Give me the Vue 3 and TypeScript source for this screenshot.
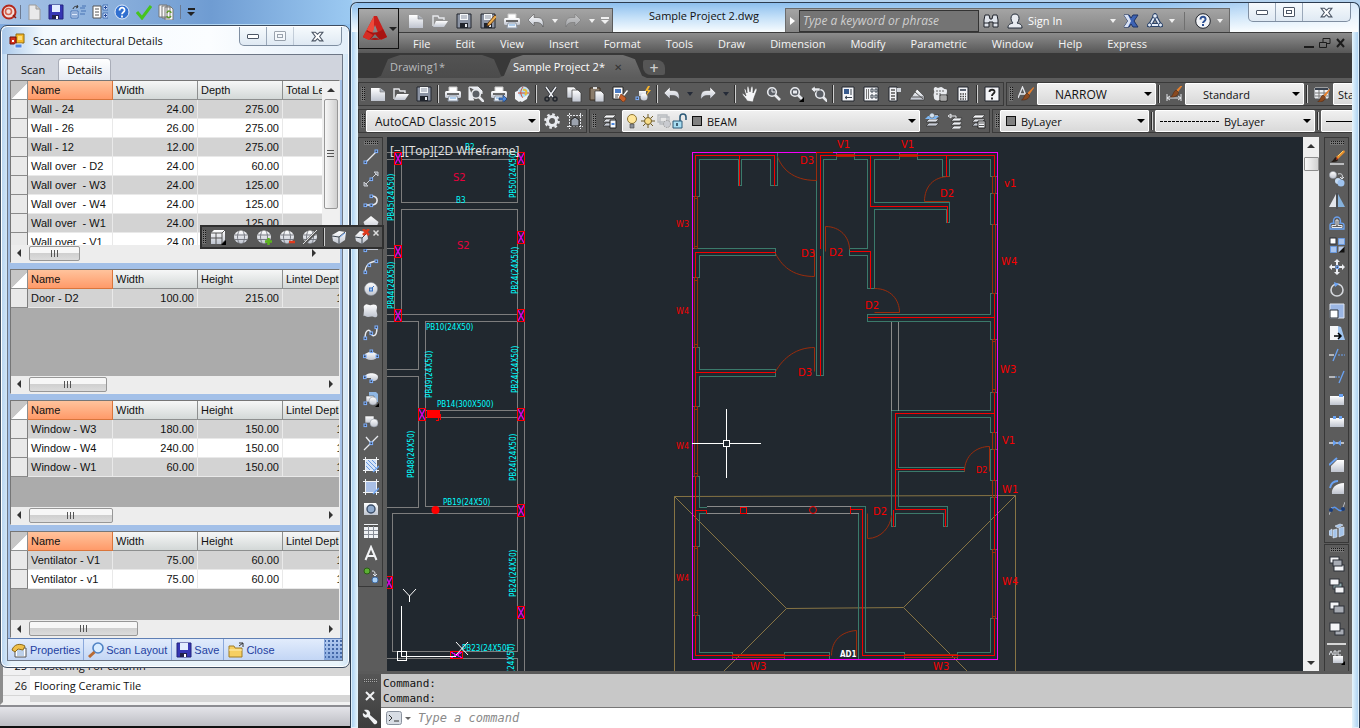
<script setup lang="ts">
import { h } from 'vue'

type Row = { name: string; cells: string[] }
type Grid = { heads: string[]; rows: Row[]; size: number; thumb: number; vertical: boolean }

const G = 'fill="url(#silver)"'
const B = 'stroke="#7db0ff" fill="#3c4654"'
const dot = (x: number, y: number) => `<rect x="${x - 1}" y="${y - 1}" width="2.6" height="2.6" ${B}/>`
const globe = `<ellipse cx="8" cy="8" rx="7" ry="6.500" ${G}/><path d="M1.500 6h13M2 10.500h12M6 2c-2 4-2 8 0 12M10 2c2 4 2 8 0 12" stroke="#6d7178" stroke-width=".9" fill="none"/>`
const page = `<path d="M1 2h9l5 4v9H1z" ${G}/><path d="M10 2v4h5" fill="#aab0ba" stroke="#777" stroke-width=".6"/>`
const folder = `<path d="M1 13V3h5l1 2h5v2" fill="none" stroke="#e6e8ec" stroke-width="1.4"/><path d="M4 8h12l-4 6H1z" ${G}/>`
const disk = `<path d="M1 1h14v14H1z" fill="#8b93a3" stroke="#20242c"/><path d="M4 1h8v6H4z" fill="#f4f6f8"/><path d="M5 3h6M5 5h6" stroke="#8b93a3"/><path d="M4 10h8v5H4z" fill="#20242c"/><path d="M9 11h2v3H9z" fill="#e6e8ec"/>`
const blueDisk = `<path d="M1 1h14v14H1z" fill="#3636b4" stroke="#23237c"/><path d="M4 1h8v7H4z" fill="#e2ecff"/><path d="M4 11h7v4H4z" fill="#20204c"/><path d="M8 12h2v3H8z" fill="#fff"/>`
const printer = `<path d="M4 1h8v5H4z" fill="#fff" stroke="#ccc"/><rect x="0" y="5" width="16" height="7" rx="1.5" ${G}/><path d="M2 8h12" stroke="#333" stroke-width="1.4"/><path d="M4 10h8l1 5H3z" fill="#eef4fb" stroke="#8d97a6"/><path d="M5 12h6" stroke="#6fa5dc"/>`
const undo = `<path d="M0 7l6-6v3.500h3c5 0 7 3 6 9.500-1-3-3-4.500-6-4.500H6V13z" ${G} stroke="#444" stroke-width=".5"/>`
const redo = `<path d="M16 7l-6-6v3.500H7c-5 0-7 3-6 9.500 1-3 3-4.500 6-4.500h3V13z" ${G} stroke="#444" stroke-width=".5"/>`
const lens = (x: number, y: number) => `<circle cx="${x}" cy="${y}" r="4.300" fill="#5b5f66" stroke="#e8eaee" stroke-width="1.600"/><path d="M${x + 3} ${y + 3}l5 5" stroke="#e8eaee" stroke-width="2.600"/>`
const brush = `<path d="M15.500 1l-6 6 1.500 2 5-7z" fill="#e8802c"/><path d="M9 7l2.500 2.500c0 3-4 5-8 4.500 3-1 2-5 5.500-7z" fill="#8a4a20" stroke="#4a230d" stroke-width=".5"/>`
const sheets = `<path d="M5 2h10l-3 3H2zM5 6h10l-3 3H2zM5 10h10l-3 3H2z" ${G} stroke="#333" stroke-width=".7"/>`
const ball = (x: number, y: number, r: number) => `<circle cx="${x}" cy="${y}" r="${r}" ${G} stroke="#88909c" stroke-width=".5"/>`
const box = (x: number, y: number, w: number, t: number, f: string) => `<rect x="${x}" y="${y}" width="${w}" height="${t}" fill="${f}" stroke="#2b2f36"/>`

const icons: Record<string, string> = {
  page, folder, disk, blueDisk, printer, undo, redo, globe, brush,
  target: '<circle cx="8" cy="8" r="6.500" fill="#f2dedb" stroke="#b4281c" stroke-width="2"/><circle cx="7.500" cy="7.500" r="3" fill="none" stroke="#d4604c" stroke-width="1.600"/><path d="M12 11l3 3" stroke="#8c1a10" stroke-width="1.500"/>',
  blank: '<path d="M3 1h7l4 4v11H3z" fill="#e9e9ea" stroke="#9a9a9a"/><path d="M10 1v4h4" fill="#c9c9c9" stroke="#9a9a9a"/>',
  layout: '<path d="M1 7h7v7H1zM2 9h5M2 12h5M10 4h5M11 7h5M10 10h5M12 2h4" fill="#dce9fb" stroke="#4672b4"/><path d="M3 5c1-3 3-3 5-2l-1-2m1 2l-2 1" fill="none" stroke="#333"/>',
  treeList: '<path d="M1 2h8v12H1zM3 5h4M3 8h4M3 11h4" fill="#fff" stroke="#555"/><path d="M11 1h5v5h-5zM11 9h5v5h-5z" fill="#cfe0fa" stroke="#4672b4"/><path d="M12 3.500h3M12 11.500h3M13.500 2v3M13.500 10v3" stroke="#234a9a"/>',
  helpBlue: '<circle cx="8" cy="8" r="7" fill="#2f6fd0" stroke="#e2ecfa"/><path d="M5.500 6.500c0-4 5.500-3.500 5 0-.5 2-2.500 2-2.500 3.800M8 11.500v2" fill="none" stroke="#fff" stroke-width="1.800"/>',
  check: '<path d="M1 8l5 6L15 2" fill="none" stroke="#46c41e" stroke-width="3"/>',
  copies: '<path d="M1 1h8v12H1zM4 2h8v12H4zM7 3h6l2 2v11H7z" fill="#f8f8f8" stroke="#777"/><path d="M9 9c1-3 4-2 4 0m0 3c-1 2-4 2-4 0" fill="none" stroke="#5c9a26" stroke-width="1.500"/>',
  form: '<path d="M7 1h8v9H7z" fill="#f5b92a" stroke="#8c6a14"/><path d="M1 4h6v7H1z" fill="#d2321e" stroke="#701208"/><path d="M6 11h7v4H6z" fill="#4f86e4" stroke="#dfe9fa"/><path d="M9 3h4v4H9z" fill="#fcdc7c"/><path d="M3 7h2v2H3z" fill="#fff"/>',
  props: '<path d="M4 6h11v9H4z" fill="#fff" stroke="#555"/><path d="M6 9h7M6 11h7M6 13h7" stroke="#7aa0d2"/><path d="M1 8c2-6 8-7 13-4l-2 4-5-1-3 3z" fill="#efbf4a" stroke="#8c6a1c"/>',
  scan: '<circle cx="10" cy="6" r="5" fill="#d9ecff" stroke="#4f82c4" stroke-width="1.600"/><path d="M6.500 10L1 15" stroke="#b86a34" stroke-width="3"/>',
  closeFolder: '<path d="M1 4h5l1 2h7v9H1z" fill="#f6cf62" stroke="#a07c24"/><path d="M1 8h13" stroke="#fff0b4"/><path d="M15 5V1h-4m4 0l-4 3" fill="none" stroke="#333"/>',
  diskPen: disk + '<path d="M15 2l-7 8-1 3 3-1 7-8z" fill="#ecae4e" stroke="#69401c"/>',
  preview: '<path d="M1 1h9l4 4v3M1 1v13h5" fill="#e7eaf0" stroke="#f0f2f5"/>' + lens(8, 8),
  publish: printer + '<path d="M8 12h4V9l4 4-4 3.500V14H8z" fill="#4c88e0" stroke="#12305c" stroke-width=".6"/>',
  world: '<path d="M1 6l5-2 2 10-3 2-4-3z" fill="#f1f3f6"/><circle cx="9.500" cy="6.500" r="5.500" fill="#a9ddf4" stroke="#eef" /><path d="M9 1c-3 4-3 7 0 11M4 7h11" fill="none" stroke="#dc4a2e"/><path d="M9 4c4-1 4 3 2 5" stroke="#e9bd35" fill="none" stroke-width="2"/><path d="M1 8l7 4 6-3-1 4-5 3-6-3z" fill="#eef1f5"/>',
  cut: '<path d="M3 1l7 10M13 1L6 11" stroke="#23272e" stroke-width="3"/><path d="M3 1l7 10M13 1L6 11" stroke="#eceef2" stroke-width="1.500"/><circle cx="4" cy="13" r="2" fill="none" stroke="#23272e" stroke-width="1.500"/><circle cx="12" cy="13" r="2" fill="none" stroke="#23272e" stroke-width="1.500"/>',
  copy: `<path d="M1 1h7l3 3v8H1z" ${G} stroke="#444" stroke-width=".6"/><path d="M6 4h6l3 3v9H6z" ${G} stroke="#333" stroke-width=".7"/>`,
  paste: `<path d="M1 2h10v12H1z" fill="#8b7c6a" stroke="#3b2d1e"/><path d="M4 1h4v2H4z" fill="#ddd"/><path d="M6 5h6l3 3v8H6z" ${G} stroke="#333" stroke-width=".7"/>`,
  match: '<path d="M1 1h10v12H1z" fill="#fff" stroke="#222"/><path d="M3 3h6v4H3z" fill="#4c7cc4"/><path d="M3 9h4M3 11h3" stroke="#444"/><path d="M15 4l-4 5 1 1 4-5z" fill="#fff"/><path d="M9 8l5 4c0 2-2 4-3 4l-4-4z" fill="#c8602a" stroke="#6a2c0c" stroke-width=".6"/>',
  flash: `<rect x="4" y="5" width="7" height="5" ${G}/><circle cx="9" cy="11" r="3.500" ${G}/>` + dot(2, 12) + '<path d="M13 0l-3 5h3l-2 5 5-6h-3l2-4z" fill="#f5b32c"/>',
  hand: '<path d="M5 15C4 12 1 10 0 8c1-1 2 0 4 2L2 3c1-1 2 0 3 4L5 1c1-1 2 0 2 1l1 4 1-5c1-1 2 0 2 1v5l2-4c1-1 2 0 2 1l-3 8-1 4z" fill="#f4f5f7" stroke="#444" stroke-width=".6"/>',
  zoomRt: '<g transform="translate(1 0)">' + lens(6, 6) + '</g><path d="M7 3v3h3" fill="none" stroke="#e8eaee"/>',
  zoomWin: lens(7, 6) + '<path d="M5 4.500h4v3H5z" fill="#e8eaee"/><path d="M16 11v5h-5z" fill="#000"/>',
  zoomPrev: lens(9, 8) + '<path d="M0 3l4-3v2h5v3H4v2z" fill="#e8eaee" stroke="#444" stroke-width=".5"/>',
  palette: '<path d="M2 1h12v14H2z" fill="#f2f3f6" stroke="#20242c"/><path d="M4 3h5v5H4z" fill="#37598c"/><path d="M11 3v6M5 11.500h7M7 10l-2 1.500L7 13" stroke="#39424f" fill="none"/>',
  design: '<path d="M1 1h14v14H1z" fill="#f2f3f6" stroke="#20242c"/><path d="M3.500 3v10M5.500 3v10" stroke="#777"/><path d="M8 3h2v3H8zM12 3h2v3h-2zM8 9h2v3H8zM12 9h2v3h-2z" fill="#fff" stroke="#39424f"/>',
  toolPal: '<path d="M3 1h8v14H3z" fill="#f2f3f6" stroke="#20242c"/><path d="M5 4h4M5 7h4M5 10h4M5 13h4" stroke="#555" stroke-width="1.400"/><path d="M11 2h4v4h-4z" fill="#cfd3da"/>',
  sheetSet: `<path d="M1 13l7-10 7 7v4H1z" ${G} stroke="#333" stroke-width=".6"/><path d="M3 11h11M6 6l8 7" stroke="#555"/>`,
  markup: '<path d="M2 2c2-2 3 0 4 0s3-2 5 0 4 0 4 3-1 3 0 5H8v4c-3 1-6 0-6-2s-1-3 0-5-1-3 0-5z" fill="#e9ebef"/><path d="M4 5h9M4 8h5" stroke="#666" stroke-dasharray="2 1"/><path d="M8 9h7v6H8z" fill="#fff" stroke="#222"/><path d="M9 11h5M9 13h5" stroke="#555"/>',
  calc: '<path d="M3 1h10v14H3z" fill="#f2f3f6" stroke="#20242c"/><path d="M5 3h6v2H5z" fill="#59616e"/><path d="M5 8h6M5 10.500h6M5 13h6" stroke="#444" stroke-dasharray="1.500 1" stroke-width="1.400"/>',
  help: '<path d="M1 1h14v14H1z" fill="#f2f3f6" stroke="#20242c"/><path d="M5.500 6c0-3 5.500-3 5 0-.5 2-2.500 2-2.500 4M8 11.500v2" fill="none" stroke="#222" stroke-width="1.900"/>',
  textStyle: '<path d="M0 12L4.500 1 9 12M2 8h5" fill="none" stroke="#e4e6ea" stroke-width="1.300"/>' + brush,
  dimStyle: '<path d="M1 8v7M15 8v7M1 12h14M4 10l-3 2 3 2M12 10l3 2-3 2" fill="none" stroke="#e4e6ea"/><g transform="translate(1 -3)">' + brush + '</g>',
  tableStyle: '<path d="M1 2h13v10H1z" fill="#f2f3f6" stroke="#dfe2e7"/><path d="M1 3h13" stroke="#39424f" stroke-width="2"/><path d="M1 7h13M1 10h13M5 4v8M10 4v8" stroke="#777"/><g transform="translate(0 2)">' + brush + '</g>',
  gear: '<circle cx="8" cy="8" r="4.500" fill="none" stroke="#e9ebef" stroke-width="3"/><circle cx="8" cy="8" r="6.600" fill="none" stroke="#e9ebef" stroke-width="2.400" stroke-dasharray="2.600 2.580"/>',
  snap: '<path d="M0 2.500h16M0 13.500h16M2.500 0v16M13.500 0v16" stroke="#e4e6ea" stroke-dasharray="2 1"/><path d="M4 13V7l4-3 4 3v6z" fill="#9ca3ae" stroke="#222"/>',
  layerProps: sheets + '<path d="M9 7h6v8H9z" fill="#f5f7fa" stroke="#222"/><path d="M10.500 10h3v2h-3z" fill="#4c88e0"/>',
  layerCur: sheets + '<path d="M4 3h11l-3 3H1z" fill="#7db6f2"/><circle cx="8" cy="2.500" r="2.500" fill="#cfe0f0" stroke="#444" stroke-width=".5"/>',
  layerPrev: '<g transform="translate(2 3)"><path d="M5 2h8l-2 3H2zM5 6h8l-2 3H2zM5 10h8l-2 3H2z" fill="#eceef2" stroke="#333" stroke-width=".7"/></g><path d="M1 3l3-2v4zM3 3h6v2" fill="none" stroke="#e4e6ea"/>',
  layerState: sheets + '<path d="M8 8h7v7H8z" fill="#f5f7fa" stroke="#222"/><path d="M9 10h5M9 12.500h5" stroke="#555"/>',
  bulb: '<circle cx="8" cy="6" r="4.500" fill="#ffe69a" stroke="#8c7434"/><path d="M6 11h4v4H6z" fill="#8a8f98" stroke="#444" stroke-width=".6"/>',
  sun: '<circle cx="8" cy="8" r="3.500" fill="#f8dd88" stroke="#6f5a22"/><path d="M8 1v3M8 12v3M1 8h3M12 8h3M3 3l2 2M11 11l2 2M13 3l-2 2M5 11l-2 2" stroke="#6f5a22"/>',
  vpFreeze: '<path d="M2 2h9v7H2zM4 4h9v7H4z" fill="none" stroke="#b7babf" stroke-width="1.300"/><circle cx="11" cy="11" r="3.500" fill="#c9cbd0" stroke="#999" stroke-dasharray="1.500 1"/>',
  unlock: '<path d="M1 8h9v7H1z" fill="#a9def2" stroke="#2c5a78"/><path d="M8 8V4c0-4 6-4 6 0v3" fill="none" stroke="#2c5a78" stroke-width="1.600"/><path d="M5 10v3" stroke="#1e3a50" stroke-width="1.500"/>',
  line: '<path d="M2 14L14 2" stroke="#e8eaee" stroke-width="1.300"/>' + dot(2, 13) + dot(13, 2),
  xline: '<path d="M3 13L13 3" stroke="#c9ccd2"/><path d="M1 11v4h4zM11 1h4v4z" fill="#8a8e95" stroke="#c9ccd2"/>' + dot(8, 8),
  pline: '<path d="M2 12h6c8 0 8-9 1-9" fill="none" stroke="#e8eaee" stroke-width="1.600"/>' + dot(2, 12) + dot(8, 12) + dot(8, 3),
  polygon: `<path d="M8 1l7.500 6-3 8h-9l-3-8z" ${G}/>`,
  rect: `<path d="M1 3h14v10H1z" ${G}/>` + dot(2, 13) + dot(14, 3),
  arc: '<path d="M2 14C2 6 6 3 14 2" fill="none" stroke="#e8eaee" stroke-width="1.300"/>' + dot(2, 13) + dot(6, 6) + dot(13, 2),
  circle: ball(8, 8, 6.5) + '<path d="M8 8l3-3" stroke="#3b74c4"/>' + '<rect x="6.500" y="7" width="3" height="3" fill="#a9c9f4" stroke="#3b74c4"/>',
  cloud: `<path d="M2 2c2-2 4 1 6 0s6-1 6 2-1 3 0 6 0 5-3 4-4 0-6 0-3-2-4-1 0-4 0-6-1-4 1-5z" ${G}/>`,
  spline: '<path d="M2 14C2 2 8 5 8 8s6 6 6-6" fill="none" stroke="#e8eaee" stroke-width="1.500"/>' + dot(2, 13) + dot(8, 8) + dot(13, 2),
  ellipse: `<ellipse cx="8" cy="9" rx="6.500" ry="4" ${G}/>` + dot(1.5, 9) + dot(14, 9) + dot(8, 4),
  ellArc: `<path d="M2 8c0-5 13-5 13 0s-7 4-7 4V9H2z" ${G}/>` + dot(1.5, 8) + dot(8, 12),
  insert: `<path d="M6 1h7l2 2v8H6z" fill="#8fb7e4"/><path d="M3 5h8v6H3z" ${G} stroke="#555" stroke-width=".6"/>` + ball(10, 10, 4) + dot(2, 12) + '<path d="M16 12v4h-4z" fill="#000"/>',
  block: `<path d="M2 3h9v7H2z" ${G} stroke="#555" stroke-width=".6"/>` + ball(11, 10, 4) + dot(2, 12),
  point: '<path d="M1 15L15 1M3 2l5 6" stroke="#e8eaee" stroke-width="1.300"/>' + dot(8, 8),
  hatch: '<path d="M3 3h10v10H3z" fill="#d5e4f8"/><path d="M3 5l8 8M5 3l8 8M3 9l4 4M9 3l4 4" stroke="#6a9ae0"/><path d="M0 2.500h16M0 13.500h16M2.500 0v16M13.500 0v16" stroke="#f0f2f5"/><path d="M10 15l6-6" stroke="#6aa2f2" stroke-width="1.500"/>',
  gradient: '<path d="M3 3h10v10H3z" fill="#a9bfe6"/><path d="M0 2.500h16M0 13.500h16M2.500 0v16M13.500 0v16" stroke="#f0f2f5"/><path d="M10 15l6-6" stroke="#6aa2f2" stroke-width="1.500"/>',
  region: `<path d="M1 2h12l2 3v9H1z" ${G}/><circle cx="8" cy="8" r="4" fill="#8fa9cc" stroke="#3c4e68" stroke-width="1.400"/>`,
  table: '<path d="M1 1h14v14H1z" fill="#eff1f4"/><path d="M1 3h14" stroke="#555" stroke-width="2"/><path d="M1 7.500h14M1 11.500h14M5.500 3v12M10.500 3v12" stroke="#878c95"/>',
  mtext: '<path d="M2.500 15L8 2l5.500 13M4.500 11h7" fill="none" stroke="#f2f3f5" stroke-width="2"/>',
  addSel: '<circle cx="4" cy="4" r="3" fill="#5cb034" stroke="#2a5c14"/><path d="M9 4c3 0 3 1 3 4m-2-1l2 2 2-2" fill="none" stroke="#e0e3e8"/><circle cx="12" cy="13" r="3" fill="#a9d0f6" stroke="#3f6da8"/>',
  erase: '<path d="M15 1L7 8l2 2 7-7z" fill="#e8902c"/><path d="M14 2L9 7" stroke="#fdd070"/><path d="M7 8l2 3c-1 2-4 2-7 2 2-1 3-4 5-5z" fill="#241a14"/><path d="M8 8l1 2-2 1z" fill="#e03c1c"/><path d="M1 15h14" stroke="#f0f2f5" stroke-width="1.300"/>',
  copyBalls: ball(4, 4, 3.6) + '<path d="M9 3c4-1 5 1 4 4m-2-1l2 2 2-2" fill="none" stroke="#e0e3e8"/><circle cx="9" cy="10" r="3" fill="#c6dcf4"/><circle cx="12" cy="12" r="3.500" fill="#9fc3ee"/>',
  mirror: '<path d="M7 1v13H0z" fill="#e3e6eb"/><path d="M9 1v13h7z" fill="#86b2dc"/><path d="M8 0v16" stroke="#3b4048"/>',
  offset: '<path d="M1 14v-4c0-2 3-2 4-2-3-8 9-8 6 0 1 0 4 0 4 2v4z" fill="none" stroke="#6aa2f2" stroke-width="1.300"/><path d="M3 12.500V10.500h4V5h2v5.500h4v2z" fill="none" stroke="#e8eaee"/>',
  array: box(1, 1, 6, 6, '#fff') + '<path d="M9.500 1.500h6v6h-6zM1.500 9.500h6v6h-6z" fill="#a9c4ec" stroke="#6a9ae0"/><path d="M9.500 15.500h6v-6z" fill="#111"/><path d="M9.500 15.500v-6h6z" fill="#b9cdec"/>',
  move: '<path d="M8 0l3 3H9v3H7V3H5zM8 16l3-3H9v-3H7v3H5zM0 8l3-3v2h3v2H3v2zM16 8l-3-3v2h-3v2h3v2z" fill="#eceef2"/>' + dot(8, 8),
  rotate: '<circle cx="8" cy="9" r="6" fill="none" stroke="#d5d8dd" stroke-width="1.600"/><path d="M5 1l5 2-4 3z" fill="#6aa2f2"/>',
  scale: '<path d="M1 1h14v14H1z" fill="#9bb6e4" stroke="#dfe6f2"/><path d="M1 7h8v8H1z" fill="#fff" stroke="#2b3038"/>',
  stretch: '<path d="M1 1h8v14H1z" fill="#f4f5f7"/><path d="M9 1l3 1 4 13H9z" fill="#9fc3ee"/><path d="M5 11h7m-3-3l3 3-3 3" fill="none" stroke="#000" stroke-width="1.500"/>',
  trim: '<path d="M0 8h5" stroke="#e8eaee" stroke-width="1.300"/><path d="M4 14L9 2" stroke="#6aa2f2" stroke-width="1.300"/><path d="M9 8h7" stroke="#6aa2f2" stroke-dasharray="2 1"/>',
  extend: '<path d="M0 8h6" stroke="#e8eaee" stroke-width="1.300"/><path d="M6 8h5" stroke="#6aa2f2" stroke-dasharray="2 1"/><path d="M10 14l5-12" stroke="#6aa2f2" stroke-width="1.300"/>',
  breakPt: `<path d="M1 5h14v9H1z" ${G}/><path d="M10 3h4v3h-4z" fill="#6aa2f2"/>`,
  breakIt: `<path d="M1 5h14v9H1z" ${G}/><path d="M4 3h3v3H4zM10 3h3v3h-3z" fill="#6aa2f2"/>`,
  join: '<path d="M0 8h15" stroke="#e8eaee" stroke-width="1.400"/><path d="M4 5l4 3 4-3v6L8 8l-4 3z" fill="#6aa2f2"/>',
  chamfer: `<path d="M8 3h7v12H2V9z" ${G}/><path d="M0 8l8-7" stroke="#6aa2f2" stroke-width="2"/>`,
  fillet: `<path d="M15 4v11H3C2 9 7 4 15 4z" ${G}/><path d="M1 9c1-5 4-7 8-7" fill="none" stroke="#6aa2f2" stroke-width="2"/>`,
  blend: '<path d="M0 14l3-8M13 9l3-8" stroke="#b9bcc2"/><path d="M2 9c5-8 7 5 12-1" fill="none" stroke="#5a96ee" stroke-width="1.500"/><circle cx="2" cy="9" r="2" fill="#1a3c78"/><circle cx="14" cy="8" r="2" fill="#1a3c78"/>',
  explode: '<path d="M0 8l3-2v7l-3-1zM4 7l4-1v8l-4 1zM10 5l5-1v8l-5 2zM6 3l5-2 3 1-5 3z" fill="#a4c4ea" stroke="#e3ebf6" stroke-width=".6"/>',
  ord1: box(1, 1, 9, 6, '#f4f5f7') + box(5, 9, 10, 6, '#f4f5f7') + box(4, 4, 9, 6, '#a8acb4'),
  ord2: box(4, 5, 9, 6, '#8fa9ac') + box(1, 1, 9, 6, '#f4f5f7') + box(6, 9, 9, 6, '#f4f5f7'),
  ord3: box(1, 2, 9, 7, '#f4f5f7') + box(5, 6, 10, 7, '#a8acb4'),
  ord4: box(6, 7, 9, 6, '#a8acb4') + box(1, 1, 10, 8, '#f4f5f7'),
  abc: `<path d="M4 7h10v7H4z" ${G}/><path d="M0 6l2-4 2 4M5 2v4h2V2zM12 2h-3v4h3" fill="none" stroke="#e0e3e8"/><path d="M16 12v4h-4z" fill="#000"/>`,
  vpBox: `<path d="M1 4l3-3h11v10l-4 4H1z" ${G}/><path d="M6 4v11M1 9h11M1 4h11v11M12 4l3-3" stroke="#555" fill="none"/><path d="M16 11v5h-5z" fill="#000"/>`,
  globeAdd: globe + '<path d="M12.500 9v7M9 12.500h7" stroke="#5cb41e" stroke-width="2.500"/>',
  globeSub: globe + '<path d="M10 13h6" stroke="#e03a1c" stroke-width="2.500"/>',
  globeOff: globe + '<path d="M1 16L16 1" stroke="#585858" stroke-width="3"/><path d="M1 15L15 1" stroke="#ddd"/>',
  camera: `<path d="M1 6l7-4 7 1-1 8-6 4-6-3z" ${G}/><path d="M1 7l7 1v7M8 8l6-5" stroke="#3d4650" fill="none"/><path d="M9 8l5-4" stroke="#6aa2f2"/>`,
  cameraX: `<path d="M1 7l5-5 7 1 1 7-6 5-6-3z" ${G}/><path d="M1 8l7 1v6M8 9l5-5" stroke="#3d4650" fill="none"/><path d="M9 0l6 6M15 0L9 6" stroke="#e03a1c" stroke-width="2.500"/>`,
  find: '<path d="M1 7l1-5h4l1 4h2l1-4h4l1 5v7h-5V9H6v5H1z" fill="#dfe3ea" stroke="#20242c"/><path d="M1 10h5M10 10h5" stroke="#20242c"/>',
  user: '<path d="M8 1c3 0 4 2 4 4.500S10 10 10 10c4 1 5 2 5 5H1c0-3 1-4 5-5 0 0-2-2-2-4.500S5 1 8 1z" fill="#e8ebf0" stroke="#222b38"/>',
  exchange: '<path d="M1 2h5l2 3 2-3h5l-4 6 4 6h-5l-2-3-2 3H1l4-6z" fill="#3d63b4" stroke="#1d3264"/><path d="M1 2h4l3 6-3 6H1l4-6z" fill="#d9e2f3"/>',
  cloudA: '<path d="M8 3L3 12h10z" fill="none" stroke="#2a4268" stroke-width="4"/><path d="M8 3L3 12h10z" fill="none" stroke="#e4ecf8" stroke-width="1.800"/><circle cx="8" cy="3" r="2.300" fill="#e4ecf8" stroke="#2a4268"/><circle cx="2.500" cy="12" r="2" fill="#e4ecf8" stroke="#2a4268"/><circle cx="13.500" cy="12" r="2" fill="#e4ecf8" stroke="#2a4268"/>',
  helpRound: '<circle cx="8" cy="8" r="7.300" fill="#f2f4f8" stroke="#20242c"/><path d="M5.500 6.500c0-4 5.500-3.500 5 0-.5 2-2.500 2-2.500 3.500M8 11v2" fill="none" stroke="#2c4f92" stroke-width="2"/>',
  wrench: '<path d="M2 1l3 3-1 2-3-2c-1 3 2 6 5 4l6 7c2 1 4-1 3-3L8 6c1-4-2-6-6-5z" fill="#f0f1f3"/>',
  prompt: '<rect x="0.500" y="1.500" width="15" height="13" rx="2" fill="#d8dde4" stroke="#8a929e"/><path d="M3 5l3 3-3 3M8 11h5" fill="none" stroke="#333"/>',
}

const Ico = (p: { n: string }) =>
  h('svg', { class: 'ico', viewBox: '0 0 16 16', 'aria-hidden': 'true', innerHTML: icons[p.n] })

const r = (name: string, ...cells: string[]): Row => ({ name, cells })
const grids: Grid[] = [
  {
    heads: ['Width', 'Depth', 'Total Length'], size: 184, thumb: 51, vertical: true,
    rows: [
      r('Wall - 24', '24.00', '275.00', ''), r('Wall - 26', '26.00', '275.00', ''), r('Wall - 12', '12.00', '275.00', ''),
      r('Wall over  - D2', '24.00', '60.00', ''), r('Wall over  - W3', '24.00', '125.00', ''), r('Wall over  - W4', '24.00', '125.00', ''),
      r('Wall over  - W1', '24.00', '125.00', ''), r('Wall over  - V1', '24.00', '60.00', ''),
    ],
  },
  { heads: ['Width', 'Height', 'Lintel Depth'], size: 125, thumb: 78, vertical: false, rows: [r('Door - D2', '100.00', '215.00', '15.00')] },
  {
    heads: ['Width', 'Height', 'Lintel Depth'], size: 125, thumb: 84, vertical: false,
    rows: [r('Window - W3', '180.00', '150.00', '15.00'), r('Window - W4', '240.00', '150.00', '15.00'), r('Window - W1', '60.00', '150.00', '15.00')],
  },
  {
    heads: ['Width', 'Height', 'Lintel Depth'], size: 107, thumb: 109, vertical: false,
    rows: [r('Ventilator - V1', '75.00', '60.00', '15.00'), r('Ventilator - v1', '75.00', '60.00', '15.00')],
  },
]

const backTools = ['target', '|', 'blank', 'blueDisk', 'layout', 'treeList', 'helpBlue', 'check', 'copies', '|', 'v']
const actions = [['props', 'Properties'], ['scan', 'Scan Layout'], ['blueDisk', 'Save'], ['closeFolder', 'Close']]
const quick = ['page', 'folder', 'disk', 'diskPen', 'printer', 'undo', 'v', 'redo', 'v', 'v']
const menus = ['File', 'Edit', 'View', 'Insert', 'Format', 'Tools', 'Draw', 'Dimension', 'Modify', 'Parametric', 'Window', 'Help', 'Express']
const standard = ['page', 'folder', 'disk', '|', 'printer', 'preview', 'publish', 'world', '|', 'cut', 'copy', 'paste', 'match', 'flash', '|', 'undo', 'v', 'redo', 'v', '|', 'hand', 'zoomRt', 'zoomWin', 'zoomPrev', '|', 'palette', 'design', 'toolPal', 'sheetSet', 'markup', 'calc', '|', 'help']
const drawTools = ['line', 'xline', 'pline', 'polygon', 'rect', 'arc', 'circle', 'cloud', 'spline', 'ellipse', 'ellArc', 'insert', 'block', 'point', 'hatch', 'gradient', 'region', 'table', 'mtext', 'addSel']
const modifyTools = ['erase', 'copyBalls', 'mirror', 'offset', 'array', 'move', 'rotate', 'scale', 'stretch', 'trim', 'extend', 'breakPt', 'breakIt', 'join', 'chamfer', 'fillet', 'blend', 'explode']
const orderTools = ['ord1', 'ord2', 'ord3', 'ord4']
const viewTools = ['vpBox', 'globe', 'globeAdd', 'globeSub', 'globeOff', '|', 'camera', 'cameraX']

type Label = [string, number, number]
const beamsH: Label[] = [['B2', 465, 150], ['B3', 456, 203], ['PB10(24X50)', 426, 330], ['PB14(300X500)', 437, 407], ['PB19(24X50)', 443, 505], ['PB23(24X50)', 462, 651]]
const beamsV: Label[] = [['PB50(24X50)', 516, 198], ['PB45(24X50)', 394, 221], ['PB44(24X50)', 394, 309], ['PB24(24X50)', 518, 294], ['PB49(24X50)', 432, 398], ['PB24(24X50)', 518, 393], ['PB48(24X50)', 414, 478], ['PB24(24X50)', 516, 481], ['PB24(24X50)', 516, 597], ['PB24(24X50)', 514, 691]]
const tags: Label[] = [['V1', 837, 148], ['V1', 901, 148], ['D3', 800, 164], ['D2', 940, 197], ['D3', 801, 257], ['D2', 829, 256], ['W4', 1001, 265], ['D2', 865, 309], ['D3', 798, 376], ['W3', 1000, 373], ['v1', 1004, 187], ['V1', 1002, 444], ['W1', 1002, 493], ['D2', 873, 515], ['W3', 750, 670], ['W3', 933, 670], ['W4', 1002, 585]]
const smallTags: Label[] = [['W3', 676, 227], ['W4', 676, 314], ['W4', 676, 449], ['W4', 676, 581], ['D2', 976, 473]]
const columns: [number, number][] = [[398, 158], [521, 158], [521, 237], [398, 251], [398, 315], [521, 315], [422, 414], [521, 414], [521, 510], [521, 612], [389, 582]]

// Plan geometry is stored in thirds of a unit; each vertex is snapped to a pixel centre.
const plot = (d: string, ox: number, oy: number) =>
  d.replace(/([MLHVC])([^MLHVCz]*)/g, (_, cmd: string, args: string) => {
    const nums = args.trim().split(/[\s,]+/).map(Number)
    const out = nums.map((n, i) => Math.floor(n / 3) + 0.5 + (cmd === 'H' ? ox : cmd === 'V' ? oy : i % 2 ? oy : ox))
    return cmd + out.join(' ')
  })

const north = (d: string) => plot(d.replace(/C([^MLHVCz]*)/g, (_, a) => 'C' + a.replace(/,/g, ' ')), 660, 136)
const south = (d: string) => plot(d, 660, 400)

const plan = [
  { color: '#877444', soft: true, d: south('M43 815V289L1066 287V815M43 289L379 625L189 815M379 625L730 622L1066 287M730 622L923 815') },
  { color: '#3b7a6b', soft: false, d: north('M97 181H118V70H235V149H245V70H331V149H352V50M469 50V718H491V70H530V50M583 50V70H622V337H568V358H622V457H643V220H859V259H869V199H643V70H718V50M772 50V70H847V122H869V70H991V122H1012M1012 172H991V265H1012M1012 472H991V535H622V556H991V610H1012M1012 769H991V810M97 337H347V358H118V424H97M97 634H118V700H347V721H118V810') },
  { color: '#3b7a6b', soft: false, d: south('M118 0V19H97M97 229H118V322H140M140 340H118V439H97M97 646H118V757H218V778M373 778V757H508V778M595 778V340M571 319H616V757H733V778M892 778V757H991V655H1012M1012 448H991V292H1012M1012 241H991V148H1012M1012 97H991V52H715V202H913V214H715V319H863V379H850V340H706V379H694V31H991V0') },
  { color: '#8a8a8a', soft: false, d: north('M694 556V824M715 556V824') },
  { color: '#8a8a8a', soft: false, d: south('M140 320H571M140 341H595') },
  { color: '#9a2c0c', soft: true, d: north('M103 181H113V337H103zM103 187H113M103 331H113M103 424H113V634H103zM103 433H113M103 625H113M530 55H583V62H530zM718 55H772V62H718zM997 122H1006V172H997zM997 265H1006V472H997zM997 610H1006V769H997zM997 616H1006M997 760H1006M352 60C365 95 395 134 469 134V50M347 352C370 400 410 422 463 422V346M347 706C370 665 410 634 463 634V706M496 346V271C540 271 568 305 568 340M868 122C820 122 793 150 793 196H868M643 457C690 457 718 490 718 529H643') },
  { color: '#9a2c0c', soft: true, d: south('M103 19H113V229H103zM103 28H113M103 220H113M103 439H113V646H103zM103 445H113M103 637H113M218 763H373V772H218zM733 763H892V772H733zM997 97H1006V148H997zM997 241H1006V292H997zM997 448H1006V655H997zM997 457H1006M997 649H1006M988 214V139C950 139 913 165 913 214M622 340V415C665 415 692 380 694 345M589 766V691C545 695 515 720 515 766') },
  { color: '#f40000', soft: false, d: north('M106 181V58H343V149M239 58V149M481 337V58H631V211H862V259M481 358V718M631 58H1003V122M859 58V122M568 346H631V457M1003 172V265M622 544H1003M1003 472V610M1003 769V810M106 424V349H347M106 634V810M106 709H347') },
  { color: '#f40000', soft: false, d: south('M106 0V19M106 229V439M106 331H140V340M106 646V766H508M571 319V340M571 328H607V766H1003V655M706 328V40H1003V97M1003 0V40M706 208H913M706 328H857V379M700 328V379M1003 148V241M1003 292V448M242 322H259V339H242z') },
]
</script>

<template>
  <div class="desktop">
    <svg class="defs" aria-hidden="true">
      <defs>
        <linearGradient id="silver" x1="0" y1="0" x2="0" y2="1">
          <stop offset="0" stop-color="#ffffff" /><stop offset="1" stop-color="#bfc4cf" />
        </linearGradient>
      </defs>
    </svg>

    <section class="back">
      <div class="back-bar">
        <template v-for="(t, i) in backTools" :key="i">
          <i v-if="t === '|'" class="bsep"></i>
          <button v-else-if="t === 'v'" class="cell more" aria-label="More"></button>
          <button v-else class="cell" :aria-label="t"><Ico :n="t" /></button>
        </template>
      </div>
      <div class="back-rows">
        <div class="brow shade"><b>25</b><span>Plastering For column</span></div>
        <div class="brow"><b>26</b><span>Flooring Ceramic Tile</span></div>
        <div class="brow shade"><b></b><span></span></div>
      </div>
      <div class="back-status"></div>
    </section>

    <section class="dialog">
      <header class="dlg-title">
        <Ico n="form" />
        <h1>Scan architectural Details</h1>
        <div class="caps">
          <button aria-label="Minimize"><i class="min"></i></button>
          <button aria-label="Maximize" class="faint"><i class="max"></i></button>
          <button aria-label="Close" class="wide"><svg viewBox="0 0 12 10"><path d="M1 1h3l2 2 2-2h3L8 5l3 4H8L6 7 4 9H1l3-4z" /></svg></button>
        </div>
      </header>
      <div class="dlg-body">
        <nav class="tabs">
          <button>Scan</button>
          <button class="on">Details</button>
        </nav>
        <div class="grids">
          <div v-for="(g, gi) in grids" :key="gi" class="pane" :style="{ flexGrow: g.size }">
            <div class="view">
              <div class="clip">
                <table>
                  <colgroup><col class="c0" /><col class="cn" /><col class="cn" /><col class="cn" /><col class="cn" /></colgroup>
                  <thead>
                    <tr><th class="corner"></th><th class="sel">Name</th><th v-for="hd in g.heads" :key="hd">{{ hd }}</th></tr>
                  </thead>
                  <tbody>
                    <tr v-for="row in g.rows" :key="row.name">
                      <th scope="row"></th><td class="nm">{{ row.name }}</td>
                      <td v-for="(c, ci) in row.cells" :key="ci">{{ c }}</td>
                    </tr>
                  </tbody>
                </table>
              </div>
              <div v-if="g.vertical" class="vbar"><i class="up"></i><span class="vthumb"></span></div>
            </div>
            <div class="hbar" :class="{ short: g.vertical }"><i class="lf"></i><span class="hthumb" :style="{ width: g.thumb + 'px' }"></span><i class="rt"></i></div>
          </div>
        </div>
        <footer class="dlg-bar">
          <button v-for="a in actions" :key="a[1]"><Ico :n="a[0]" />{{ a[1] }}</button>
          <span class="resize"></span>
        </footer>
      </div>
    </section>

    <section class="cad">
      <header class="cad-title">
        <div class="quick">
          <template v-for="(t, i) in quick" :key="i">
            <button v-if="t === 'v'" class="caret light" :class="{ bar2: i === quick.length - 1 }" aria-label="Options"></button>
            <button v-else class="qcell" :class="{ off: t === 'redo' }" :aria-label="t"><Ico :n="t" /></button>
          </template>
        </div>
        <span class="doc">Sample Project 2.dwg</span>
        <div class="info">
          <i class="tri"></i>
          <input type="text" aria-label="Search" placeholder="Type a keyword or phrase" />
          <button class="qcell" aria-label="Find"><Ico n="find" /></button>
          <button class="sign"><Ico n="user" />Sign In</button>
          <button class="caret light" aria-label="Account options"></button>
          <button class="qcell" aria-label="Exchange"><Ico n="exchange" /></button>
          <button class="qcell" aria-label="Connect"><Ico n="cloudA" /></button>
          <button class="caret light slim" aria-label="Connect options"></button>
          <i class="vline"></i>
          <button class="qcell" aria-label="Help"><Ico n="helpRound" /></button>
          <button class="caret light slim" aria-label="Help options"></button>
        </div>
        <div class="caps">
          <button aria-label="Minimize window"><i class="min"></i></button>
          <button aria-label="Restore window"><i class="max"></i></button>
          <button aria-label="Close window" class="wide"><svg viewBox="0 0 12 10"><path d="M1 1h3l2 2 2-2h3L8 5l3 4H8L6 7 4 9H1l3-4z" /></svg></button>
        </div>
      </header>

      <div class="client">
        <button class="app" aria-label="Application menu">
          <svg viewBox="0 0 26 28"><path d="M12 1L1 22l6 3 6-15 6 15 6-3L15 1z" fill="#c8201c" /><path d="M12 1L1 22l6 3 5-11z" fill="#ee4a3a" /><path d="M5 15c6 4 12 3 16-1l4 8c-7 4-17 4-24 0z" fill="#a81412" /><path d="M8 25l5-6 5 6c-3-3-7-3-10 0z" fill="#777" /><path d="M1 22l6 3 4-5-7-4z" fill="#d62c24" /></svg>
          <i></i>
        </button>
        <nav class="menu">
          <button v-for="m in menus" :key="m">{{ m }}</button>
          <svg class="mdi" viewBox="0 0 44 14" aria-hidden="true"><path d="M1 11h10" stroke-width="2" /><path d="M16.500 6.500h7v5h-7zM20 6V2.500h7v5h-3" /><path d="M34 3l7 8M41 3l-7 8" stroke-width="2" /></svg>
        </nav>
        <nav class="files">
          <button class="file">Drawing1*</button>
          <button class="file on">Sample Project 2*<b>✕</b></button>
          <button class="add" aria-label="New drawing">+</button>
        </nav>

        <div class="bars first">
          <div class="bar">
            <i class="grip"></i>
            <template v-for="(t, i) in standard" :key="i">
              <i v-if="t === '|'" class="sep"></i>
              <button v-else-if="t === 'v'" class="caret dark" aria-label="History"></button>
              <button v-else class="cell" :aria-label="t"><Ico :n="t" /></button>
            </template>
          </div>
          <div class="bar grow">
            <i class="grip"></i>
            <button class="cell" aria-label="Text style"><Ico n="textStyle" /></button>
            <div class="pick w119 ind"><select aria-label="Text style name"><option>NARROW</option></select></div>
            <i class="sep"></i>
            <button class="cell" aria-label="Dimension style"><Ico n="dimStyle" /></button>
            <div class="pick w119 ind"><select class="sm" aria-label="Dimension style name"><option>Standard</option></select></div>
            <i class="sep"></i>
            <button class="cell" aria-label="Table style"><Ico n="tableStyle" /></button>
            <div class="pick w119 tight"><select class="sm" aria-label="Table style name"><option>Standard</option></select></div>
          </div>
        </div>
        <div class="bars">
          <div class="bar">
            <i class="grip"></i>
            <div class="pick w174"><select aria-label="Workspace"><option>AutoCAD Classic 2015</option></select></div>
            <button class="cell" aria-label="Workspace settings"><Ico n="gear" /></button>
            <button class="cell" aria-label="Workspace home"><Ico n="snap" /></button>
          </div>
          <div class="bar">
            <i class="grip"></i>
            <button class="cell gap" aria-label="Layer properties"><Ico n="layerProps" /></button>
            <div class="pick w298 layer">
              <Ico n="bulb" /><Ico n="sun" /><Ico n="vpFreeze" /><Ico n="unlock" /><i class="swatch"></i>
              <select class="sm" aria-label="Layer"><option>BEAM</option></select>
            </div>
            <button class="cell" aria-label="Make current"><Ico n="layerCur" /></button>
            <button class="cell" aria-label="Previous layer"><Ico n="layerPrev" /></button>
            <button class="cell" aria-label="Layer states"><Ico n="layerState" /></button>
          </div>
          <div class="bar grow">
            <i class="grip"></i>
            <div class="pick w149"><i class="swatch"></i><select class="sm" aria-label="Color"><option>ByLayer</option></select></div>
            <i class="sep"></i>
            <div class="pick w160"><i class="dash"></i><select class="sm" aria-label="Linetype"><option>ByLayer</option></select></div>
            <i class="sep"></i>
            <div class="pick w119"><i class="dash solid"></i><select class="sm" aria-label="Lineweight"><option>ByLayer</option></select></div>
          </div>
        </div>

        <main class="work">
          <div class="side">
            <div class="tools">
              <i class="hgrip"></i>
              <button v-for="t in drawTools" :key="t" :aria-label="t"><Ico :n="t" /></button>
            </div>
          </div>
          <svg class="canvas" viewBox="387 137 916 534" preserveAspectRatio="xMinYMin slice" shape-rendering="crispEdges">
            <g fill="none" stroke="#7d7d7d">
              <path d="M387 152.500H518M387 159.500H394M394.500 152V315M401.500 159.500H517.500V202.500H401.500zM401.500 209.500H517.500V314.500H401.500zM524.500 152V671M387 248.500H394M387 255.500H394M387 314.500H402M387 321.500H418.500V369.500H387M387 376.500H418.500V507.500H387M425.500 321.500H517.500V410.500H425.500zM425.500 417.500H517.500V506.500H425.500zM392.500 513.500H517.500V651.500H392.500zM387 658.500H517.500V671" />
            </g>
            <g v-for="(c, i) in columns" :key="'c' + i" :transform="`translate(${c[0]} ${c[1]})`" fill="none">
              <path d="M-3 -5L3 6M3 -5L-3 6" stroke="#d800e0" stroke-width="1.500" shape-rendering="auto" />
              <rect x="-3.500" y="-5.500" width="7" height="12" stroke="#ff0000" />
            </g>
            <path d="M451 652L462 658M451 658L462 652" stroke="#d800e0" stroke-width="1.500" />
            <rect x="450.500" y="651.500" width="12" height="7" fill="none" stroke="#ff0000" />
            <path d="M427 410h13v8h-13z" fill="#ff0000" />
            <circle cx="435.500" cy="510" r="4" fill="#ff0000" shape-rendering="auto" />
            <path d="M438.500 413V420.500H436M440.500 414V420" stroke="#ff0000" fill="none" />
            <g class="beam">
              <text v-for="(l, i) in beamsH" :key="'h' + i" :x="l[1]" :y="l[2]">{{ l[0] }}</text>
              <text v-for="(l, i) in beamsV" :key="'v' + i" :transform="`translate(${l[1]} ${l[2]}) rotate(-90)`">{{ l[0] }}</text>
            </g>
            <g class="slab"><text x="453" y="181">S2</text><text x="457" y="249">S2</text></g>

            <g fill="none">
              <path v-for="(p, i) in plan" :key="'p' + i" :d="p.d" :stroke="p.color" :shape-rendering="p.soft ? 'auto' : 'crispEdges'" />
              <circle cx="813" cy="510" r="3.500" stroke="#f40000" shape-rendering="auto" />
            </g>
            <rect x="692.500" y="152.500" width="305" height="507" fill="none" stroke="#f800f8" />
            <path d="M816 152.500H833" stroke="#f40000" />
            <g class="tag">
              <text v-for="(l, i) in tags" :key="'t' + i" :x="l[1]" :y="l[2]">{{ l[0] }}</text>
            </g>
            <g class="tag small">
              <text v-for="(l, i) in smallTags" :key="'s' + i" :x="l[1]" :y="l[2]">{{ l[0] }}</text>
            </g>
            <text class="ad" x="840" y="657">AD1</text>
            <g fill="none" stroke="#ffffff">
              <path d="M692 443.500H723M730 443.500H761M726.500 409V440M726.500 447V478M723.500 440.500h6v6h-6z" />
              <path d="M401.500 606V656M397.500 651.500h9v9h-9zM401 656.500H456" />
              <path d="M456 655L468 642M456 642L468 655M403 589L409.500 596L416 589M409.500 596V602" shape-rendering="auto" />
            </g>
            <text class="vp" x="390" y="155">[−][Top][2D Wireframe]</text>
          </svg>
          <div class="cscroll"><i class="up"></i><span></span><i class="dn"></i></div>
          <div class="side right">
            <div class="tools">
              <i class="hgrip"></i>
              <button v-for="t in modifyTools" :key="t" :aria-label="t"><Ico :n="t" /></button>
            </div>
            <div class="tools rest">
              <i class="hgrip"></i>
              <button v-for="t in orderTools" :key="t" :aria-label="t"><Ico :n="t" /></button>
              <i class="rule"></i>
              <button aria-label="Annotation order"><Ico n="abc" /></button>
            </div>
          </div>
        </main>

        <section class="cmd">
          <div class="cmd-side">
            <i class="hgrip pale"></i>
            <button aria-label="Close command line"><svg class="ico" viewBox="0 0 16 16"><path d="M4 4l8 8M12 4l-8 8" stroke="#f0f1f3" stroke-width="2" /></svg></button>
            <button aria-label="Customize"><Ico n="wrench" /></button>
          </div>
          <div class="cmd-main">
            <pre>Command:
Command:</pre>
            <div class="entry"><Ico n="prompt" /><i class="dd"></i><input type="text" aria-label="Command" placeholder="Type a command" /></div>
          </div>
        </section>
      </div>
    </section>

    <div class="float">
      <i class="grip"></i>
      <template v-for="(t, i) in viewTools" :key="i">
        <i v-if="t === '|'" class="sep"></i>
        <button v-else class="cell" :aria-label="t"><Ico :n="t" /></button>
      </template>
      <button class="fx" aria-label="Close toolbar"><svg viewBox="0 0 6 6"><path d="M0.500 0.500l5 5M5.500 0.500l-5 5" stroke="#ddd" stroke-width="1.500" /></svg></button>
    </div>
  </div>
</template>

<style>
html, body { margin: 0; height: 100%; overflow: hidden; }
</style>

<style scoped>
.desktop { position: relative; width: 100%; height: 100vh; overflow: hidden; background: #b4d2ee; font-family: "Open Sans", "Noto Sans", sans-serif; font-size: 12px; color: #111; }
.desktop * { box-sizing: border-box; }
.defs { position: absolute; width: 0; height: 0; }
button { margin: 0; padding: 0; border: 0; background: none; color: inherit; font: inherit; }
.ico { display: block; width: 16px; height: 16px; flex: none; }
i { font-style: normal; flex: none; }

.back { position: absolute; left: 0; top: 0; bottom: 0; width: 352px; display: flex; flex-direction: column; background: linear-gradient(90deg, #7fa9de, #b9dcf5 70%, #8fc0ee); }
.back-bar { height: 24px; display: flex; align-items: center; background: linear-gradient(90deg, #a8c4e6, #6f9cd2 60%, #9ccaf2); }
.back-bar .cell { width: 22px; height: 22px; display: grid; place-items: center; }
.back-bar .cell:first-child { width: 17px; }
.bsep { width: 1px; height: 14px; margin: 0 2px 0 3px; background: #6b7a92; }
.more::before { content: ""; width: 7px; height: 2px; background: #222; }
.more::after { content: ""; border: 4px solid transparent; border-top-color: #222; border-bottom: 0; }
.more { align-content: center; gap: 2px; }
.back .bsep + .more { width: 16px; }
.back-rows { margin-top: auto; height: 49px; border-left: 3px solid #8c8c8c; border-bottom: 3px solid #f2f2f2; background: #fff; overflow: hidden; }
.brow { display: flex; height: 20px; line-height: 19px; font-size: 11px; }
.brow b { width: 27px; padding-right: 3px; text-align: right; font-weight: 400; background: #f1f1f2; border-bottom: 1px solid #d6d6d6; }
.brow span { flex: 1; padding-left: 4px; border-bottom: 1px solid #d6d6d6; }
.shade span { background: #d6d6d6; }
.back-status { height: 23px; border-top: 2px solid #8d8d92; border-bottom: 2px solid #111; background: linear-gradient(#e4e4e9, #bdbec4); }

.dialog { position: absolute; left: 0; top: 25px; bottom: 60px; width: 350px; padding: 1px 6px 6px; border: 1px solid #3d4c60; border-radius: 7px; background: linear-gradient(90deg, #b4d2f0, #e9f4fb 3%, #e9f4fb 97%, #cfe3f5); box-shadow: inset 0 0 0 1px #fff; display: flex; flex-direction: column; }
.dlg-title { height: 27px; display: flex; align-items: center; margin: 0 -5px; padding-left: 7px; background: linear-gradient(90deg, #a9c8ea, #f4fafe 12%, #fbfdff 60%, #e3eef9); border-radius: 6px 6px 0 0; }
h1 { margin: 0 0 0 8px; font-size: 11px; font-weight: 400; line-height: 16px; flex: 1; }
.caps { align-self: flex-start; display: flex; height: 19px; border: 1px solid #7f8ea1; border-top: 0; border-radius: 0 0 5px 5px; background: linear-gradient(#f6fafd, #dfe9f3); }
.dlg-title .caps { margin-right: 6px; }
.caps button { flex: none; width: 27px; display: grid; place-items: center; border-right: 1px solid #9aa8b9; }
.caps .wide { width: 47px; border: 0; }
.caps svg { width: 13px; height: 11px; fill: #fff; stroke: #4c5665; }
.min { width: 12px; height: 5px; border: 1px solid #4c5665; border-radius: 1px; background: #fff; }
.max { width: 12px; height: 10px; border: 1px solid #4c5665; border-radius: 1px; background: #fff; box-shadow: inset 0 0 0 2px #fff, inset 0 0 0 3px #4c5665; }
.faint { opacity: .5; }
.dlg-body { flex: 1; min-height: 0; display: flex; flex-direction: column; border: 1px solid #6d7685; background: #f0f0f0; font-family: "Liberation Sans", sans-serif; font-size: 11px; }
.tabs { height: 25px; flex: none; display: flex; align-items: flex-end; padding-left: 2px; background: #d0d4dd; font-family: "Open Sans", sans-serif; }
.tabs button { height: 22px; padding: 0 11px; }
.tabs .on { padding: 0 8px; border: 1px solid #a9adb8; border-bottom: 0; border-radius: 4px 4px 0 0; background: linear-gradient(#fff, #e6eaf2); margin-left: 2px; }
.grids { flex: 1; min-height: 0; display: flex; flex-direction: column; gap: 6px; padding: 0 2px; background: #a3c0e8; }
.pane { flex: 1 1 0; min-height: 0; display: flex; flex-direction: column; border: 1px solid #767676; border-bottom-color: #eee; border-right-color: #eee; background: #ababab; }
.view { flex: 1; min-height: 0; display: flex; }
.clip { flex: 1; min-width: 0; overflow: hidden; }
table { table-layout: fixed; width: 357px; border-collapse: separate; border-spacing: 0; }
.c0 { width: 17px; }
.cn { width: 85px; }
th, td { height: 19px; padding: 0 3px; overflow: hidden; white-space: pre; line-height: 18px; font-weight: 400; }
thead th { text-align: left; background: linear-gradient(#f6f7f7, #d3d8d7); border-right: 1px solid #8d8f8f; border-bottom: 1px solid #8d8f8f; }
thead .sel { background: linear-gradient(#ffc39c, #ff9a69); border-color: #d9753c; }
thead .corner { background: linear-gradient(135deg, #c6c6c6 55%, #fff 56%); }
tbody th { background: #e9e9e9; border-right: 1px solid #7f7f7f; border-bottom: 1px solid #8a8a8a; }
td { text-align: right; border-right: 1px solid #e9e9e9; border-bottom: 1px solid #e9e9e9; background: #fff; }
td.nm { text-align: left; }
tbody tr:nth-child(odd) td { background: #d3d3d3; }
.vbar { width: 17px; background: #f0f0f0; display: flex; flex-direction: column; align-items: center; }
.vthumb { margin-top: 7px; width: 14px; height: 110px; border: 1px solid #979797; border-radius: 2px; background: repeating-linear-gradient(#555 0 1px, transparent 1px 3px) center / 7px 8px no-repeat, linear-gradient(90deg, #f7f7f7, #cfcfcf); }
.hbar { height: 17px; flex: none; display: flex; align-items: center; padding: 0 6px; background: #ededed; }
.hbar.short { padding-right: 23px; }
.hthumb { margin-left: 8px; height: 15px; border: 1px solid #979797; border-radius: 2px; background: repeating-linear-gradient(90deg, #555 0 1px, transparent 1px 3px) center / 8px 7px no-repeat, linear-gradient(#f7f7f7 45%, #d0d0d0 50%, #dcdcdc); }
.up, .dn, .lf, .rt { width: 0; height: 0; border: 4px solid transparent; }
.up { margin-top: 7px; border-top: 0; border-bottom-color: #333; }
.dn { border-bottom: 0; border-top-color: #333; }
.lf { border-left: 0; border-right-color: #333; }
.rt { margin-left: auto; border-right: 0; border-left-color: #333; }
.dlg-bar { height: 22px; flex: none; display: flex; background: linear-gradient(#e2ecfc, #c3d6f5); border-top: 1px solid #5f7fb4; color: #1f3fa0; }
.dlg-bar button { display: flex; align-items: center; gap: 3px; padding: 0 3px; border-right: 1px solid #8aa8dc; }
.dlg-bar button + button { padding: 0 4px; gap: 2px; }
.dlg-bar button:nth-last-child(2) { flex: 1; }
.resize { width: 17px; background: conic-gradient(#4468a8 25%, transparent 0) 100% 100% / 4px 4px, linear-gradient(#b4cbf0, #86a8de); clip-path: polygon(0 0, 100% 0, 100% 100%, 0 100%); }

.cad { position: absolute; left: 350px; right: 0; top: 2px; bottom: 0; padding: 0 7px; border: 1px solid #2c3c50; border-bottom: 0; border-radius: 7px 7px 0 0; background: linear-gradient(90deg, #a5cdf0, #e6f5fc 7px, #e6f5fc calc(100% - 7px), #a5cdf0); display: flex; flex-direction: column; box-shadow: inset 0 0 0 1px #dff0fb; }
.cad-title { height: 29px; flex: none; display: flex; align-items: flex-end; margin: 0 -6px; padding: 0 6px; background: linear-gradient(90deg, #ffffff00 80%, #ffffffaa 100%), linear-gradient(#8dbfee, #c4e0f8 50%, #f8fcfe); border-radius: 6px 6px 0 0; }
.quick { height: 24px; width: 255px; display: flex; align-items: center; padding-left: 45px; background: linear-gradient(#a4a4a4, #858585); border: 1px solid #5b5b5b; border-bottom: 0; }
.qcell { width: 24px; height: 22px; display: grid; place-items: center; }
.off { opacity: .45; }
.caret { width: 13px; height: 20px; display: grid; place-items: center; align-content: center; gap: 1px; }
.caret::before { content: ""; border: 3px solid transparent; border-bottom: 0; border-top: 4px solid #252b38; }
.caret.light::before { border-top-color: #f0f0f0; }
.caret.bar2::before { content: ""; width: 8px; height: 2px; border: 0; background: #f0f0f0; }
.caret.bar2::after { content: ""; border: 4px solid transparent; border-bottom: 0; border-top-color: #f0f0f0; }
.doc { align-self: flex-start; padding: 5px 0 0 36px; font-size: 11px; line-height: 16px; width: 172px; }
.info { height: 24px; flex: 0 1 445px; min-width: 0; display: flex; align-items: center; background: linear-gradient(#a4a4a4, #858585); border: 1px solid #6b6b6b; border-bottom: 0; color: #fff; }
.tri { width: 13px; display: grid; place-items: center; }
.tri::before { content: ""; border: 4px solid transparent; border-right: 0; border-left: 5px solid #fff; }
.info input { width: 180px; height: 22px; border: 1px solid #333; background: #747474; padding: 0 3px; color: #cfcfcf; font: italic 12px "Open Sans", sans-serif; }
.info input::placeholder, .entry input::placeholder { color: inherit; opacity: 1; }
.sign { display: flex; align-items: center; gap: 5px; font-size: 11px; width: 103px; padding-left: 4px; }
.slim { width: 9px; }
.vline { width: 1px; height: 18px; background: #707070; margin: 0 6px 0 8px; }
.cad-title .caps { margin: 0 1px 0 auto; }

.client { position: relative; flex: 1; min-height: 0; display: flex; flex-direction: column; background: #5c5c5c; }
.app { position: absolute; left: 0; top: -24px; width: 41px; height: 41px; border: 1px solid #111; background: linear-gradient(#a9a9a9, #6a6a6a); display: flex; align-items: center; padding-left: 3px; z-index: 2; }
.app svg { width: 26px; height: 28px; }
.app i { margin-left: 1px; border: 4px solid transparent; border-bottom: 0; border-top-color: #222; }
.menu { height: 21px; flex: none; display: flex; align-items: center; gap: 25px; padding: 0 5px 0 55px; background: linear-gradient(#8d8d8d, #575757); border-top: 1px solid #3c3c3c; color: #f5f5f5; font-size: 11px; }
.mdi { width: 44px; height: 14px; margin-left: auto; fill: none; stroke: #1c1c1c; }
.files { height: 25px; flex: none; display: flex; align-items: flex-end; padding-left: 18px; background: #383838; color: #b9bbbd; font-size: 11px; }
.file { width: 130px; height: 23px; padding: 0 14px; text-align: left; background: linear-gradient(#535353, #4b4b4b); clip-path: polygon(0 100%, 5px 90%, 12px 18%, 18px 2px, 24px 0, calc(100% - 24px) 0, calc(100% - 18px) 2px, calc(100% - 12px) 18%, calc(100% - 5px) 90%, 100% 100%); }
.file.on { width: 148px; margin-left: -7px; background: linear-gradient(#707070, #5c5c5c); color: #fff; white-space: nowrap; }
.file b { margin-left: 9px; color: #333; font: 10px "DejaVu Sans", sans-serif; }
.add { width: 22px; height: 15px; margin: 0 0 3px -4px; border-radius: 2px 8px 2px 8px; background: #565656; color: #ccc; font: bold 12px/14px "DejaVu Sans", sans-serif; }
.bars { flex: none; display: flex; gap: 2px; margin-top: 3px; overflow: hidden; }
.bars.first { margin-top: 4px; }
.bar { height: 24px; flex: none; display: flex; align-items: center; border: 1px solid #3a3a3a; background: #5a5a5a; }
.bar.grow { flex: 1; min-width: 0; overflow: hidden; border-right: 0; }
.grip { width: 4px; height: 14px; margin: 0 1px 0 2px; background: conic-gradient(#161616 25%, #747474 0) 0 0 / 2px 2px; }
.cell { width: 23px; height: 22px; flex: none; display: grid; place-items: center; }
.sep { width: 2px; height: 18px; margin: 0 2px; background: linear-gradient(90deg, #2b2b2b 50%, #cfcfcf 50%); }
.gap { margin-right: 2px; }
.pick { position: relative; height: 22px; flex: none; display: flex; align-items: center; border: 1px solid #fff; border-radius: 1px; background: linear-gradient(#f0f0f0, #d9d9d9); padding-left: 4px; }
.pick::after { content: ""; position: absolute; right: 3px; top: 8px; border: 4px solid transparent; border-bottom: 0; border-top-color: #000; pointer-events: none; }
.pick select { flex: 1; min-width: 0; height: 20px; appearance: none; border: 0; background: none; padding: 0 4px; font: 12px "Open Sans", sans-serif; color: #111; }
.pick select.sm { font-size: 11px; }
.w119 { width: 119px; }
.ind select { padding-left: 13px; }
.tight { padding-left: 0; }
.w174 { width: 174px; }
.w298 { width: 298px; }
.w149 { width: 149px; }
.w160 { width: 160px; }
.layer { padding-left: 1px; }
.swatch { width: 10px; height: 10px; margin: 0 1px; border: 1px solid #111; background: #808080; }
.layer .swatch { margin-left: 4px; }
.dash { width: 60px; height: 1px; background: repeating-linear-gradient(90deg, #000 0 3px, transparent 3px 4px); }
.solid { background: #000; }

.work { flex: 1; min-height: 0; display: flex; margin-top: 4px; overflow: hidden; }
.side { width: 29px; flex: none; overflow: hidden; background: #5c5c5c; }
.side.right { width: 33px; padding-left: 5px; display: flex; flex-direction: column; gap: 1px; }
.tools { width: 25px; border: 1px solid #383838; display: flex; flex-direction: column; align-items: center; flex: none; }
.tools button { width: 22px; height: 22px; flex: none; display: grid; place-items: center; }
.rest { flex: 1; min-height: 0; overflow: hidden; border-bottom: 0; }
.hgrip { width: 14px; height: 4px; margin: 3px 0 1px; background: conic-gradient(#161616 25%, #747474 0) 0 0 / 2px 2px; }
.hgrip.pale { background: conic-gradient(#a8a8a8 25%, #4a4a4a 0) 0 0 / 2px 2px; }
.rule { width: 19px; height: 2px; margin: 2px 0 1px; background: #d6d6d6; }
.canvas { flex: 1; min-width: 0; height: 100%; display: block; background: #21282f; }
.beam { fill: #00ffff; font: 8px "DejaVu Sans Condensed", "DejaVu Sans", sans-serif; }
.slab { fill: #e8003c; font: 10px "DejaVu Sans", sans-serif; }
.tag { fill: #f80000; font: 10px "DejaVu Sans", sans-serif; }
.tag.small { font-size: 8px; }
.ad { fill: #fff; font: bold 8px "DejaVu Sans Condensed", "DejaVu Sans", sans-serif; }
.vp { fill: #e6e6e6; font: 12px "Open Sans", sans-serif; }
.cscroll { width: 16px; flex: none; display: flex; flex-direction: column; align-items: center; background: #efefef; }
.cscroll span { width: 15px; height: 14px; margin-top: 9px; border: 1px solid #8e8e8e; border-radius: 1px; background: linear-gradient(90deg, #fafafa, #d2d2d2); }
.cscroll .dn { margin: auto 0 6px; }

.cmd { height: 57px; flex: none; display: flex; border-top: 3px solid #5a5a5a; }
.cmd-side { width: 23px; flex: none; display: flex; flex-direction: column; align-items: center; background: linear-gradient(#565656, #3c3c3c); }
.cmd-side .hgrip { margin: 5px 0 2px; }
.cmd-side button { height: 22px; display: grid; place-items: center; }
.cmd-main { flex: 1; display: flex; flex-direction: column; }
pre { margin: 0; height: 34px; padding: 2px 2px 0; font: 11px/15px "DejaVu Sans Mono", monospace; background: #c8c8c8; border-bottom: 1px solid #777; color: #111; }
.entry { flex: 1; display: flex; align-items: center; padding-left: 5px; background: #fff; }
.dd { margin: 0 5px 0 3px; border: 3px solid transparent; border-bottom: 0; border-top-color: #666; }
.entry input { flex: 1; border: 0; outline: 0; padding: 0 2px; background: none; color: #8a8a8a; font: italic 12px "DejaVu Sans Mono", monospace; }

.float { position: absolute; left: 200px; top: 225px; width: 184px; height: 24px; display: flex; align-items: center; border: 2px solid #2f2f2f; background: #585858; z-index: 5; }
.float .grip { margin: 0; }
.float .sep { margin: 0 2px; }
.fx { align-self: flex-start; margin: 3px 0 0; }
.fx svg { display: block; width: 6px; height: 6px; }
</style>
